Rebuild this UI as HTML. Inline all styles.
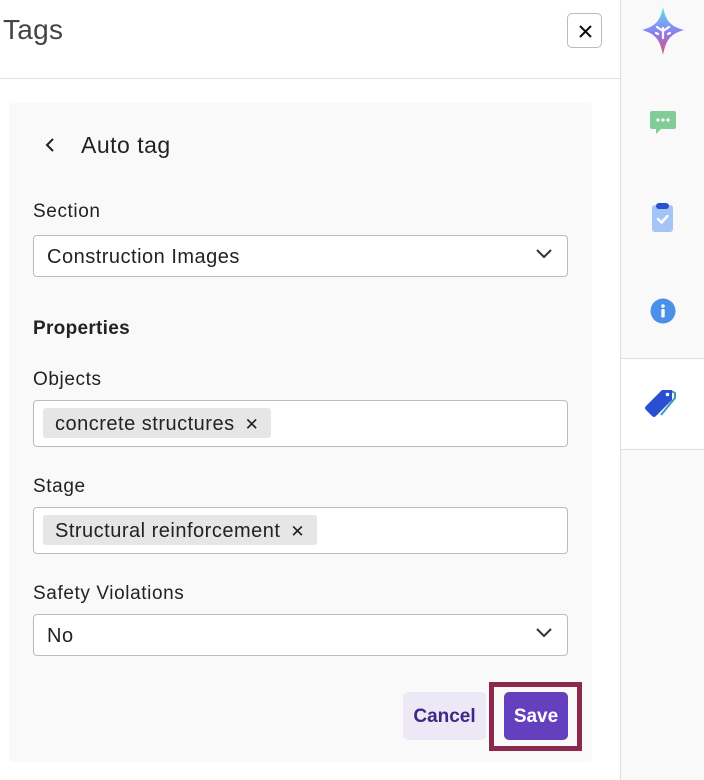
<!DOCTYPE html>
<html><head><meta charset="utf-8"><style>
*{box-sizing:border-box;margin:0;padding:0}
body{width:704px;height:780px;background:#fff;font-family:"Liberation Sans",sans-serif;color:#222;position:relative;overflow:hidden}
.abs{position:absolute}
.title{left:3px;top:14px;font-size:28px;color:#444;letter-spacing:0.3px}
.close{left:567px;top:13px;width:35px;height:35px;border:1px solid #bbb;border-radius:5px;background:#fff}
.hr{left:0;top:78px;width:620px;height:1px;background:#ddd}
.side{left:620px;top:0;width:84px;height:780px;background:#f9f9f9;border-left:1px solid #ddd}
.tagsel{left:621px;top:358px;width:83px;height:92px;background:#fff;border-top:1px solid #ddd;border-bottom:1px solid #ddd}
.card{left:9px;top:103px;width:583px;height:659px;background:#f9f9f9;border-radius:4px}
.lbl{font-size:19px;color:#222;letter-spacing:0.6px}
.box{left:33px;width:535px;height:42px;border:1px solid #bbb;border-radius:4px;background:#fff}
.sel{font-size:20px;padding:10px 0 0 13px;letter-spacing:0.5px}
.chev{position:absolute;right:14px;top:12px}
.chip{position:absolute;left:9px;top:7px;height:30px;background:#e6e6e6;border-radius:3px;font-size:20px;padding:5px 12px 0;white-space:nowrap;letter-spacing:0.5px}
.chip span{margin-left:10px;font-size:17px}
.btn{top:692px;height:48px;border-radius:5px;font-weight:bold;font-size:19px;text-align:center;line-height:50px}
</style></head><body>
<div class="abs title">Tags</div>
<div class="abs close"><svg width="35" height="35" viewBox="0 0 35 35"><path d="M12 12L23 23M23 12L12 23" stroke="#111" stroke-width="2"/></svg></div>
<div class="abs hr"></div>
<div class="abs side"></div>
<div class="abs tagsel"></div>
<svg class="abs" style="left:641px;top:6px" width="44" height="50" viewBox="0 0 44 50"><defs><linearGradient id="g" x1="0" y1="0" x2="0" y2="1"><stop offset="0" stop-color="#5de0f0"/><stop offset=".55" stop-color="#8b7bf0"/><stop offset="1" stop-color="#e0506a"/></linearGradient></defs><path d="M22 1C25 15 29 20 43 24C29 28 25 34 22 49C19 34 15 28 1 24C15 20 19 15 22 1Z" fill="url(#g)"/><path d="M22 22V32M22 25L16 21M22 25L28 21M15 27L17 28M29 27L27 28" stroke="#fff" stroke-width="2.2" stroke-linecap="round"/></svg>
<svg class="abs" style="left:649px;top:110px" width="28" height="26" viewBox="0 0 28 26"><path d="M3 1H25Q27 1 27 3V17Q27 19 25 19H12L7 24V19H3Q1 19 1 17V3Q1 1 3 1Z" fill="#82cc98"/><circle cx="9" cy="10" r="1.6" fill="#fff"/><circle cx="14" cy="10" r="1.6" fill="#fff"/><circle cx="19" cy="10" r="1.6" fill="#fff"/></svg>
<svg class="abs" style="left:651px;top:202px" width="24" height="30" viewBox="0 0 24 30"><rect x="1" y="3" width="21" height="27" rx="3" fill="#a4c4f6"/><rect x="5" y="1" width="13" height="6" rx="3" fill="#2a4fd0"/><path d="M7 17L10.5 20.5L16.5 14" stroke="#fff" stroke-width="2.4" fill="none" stroke-linecap="round"/></svg>
<svg class="abs" style="left:650px;top:298px" width="26" height="26" viewBox="0 0 26 26"><circle cx="13" cy="13" r="12.5" fill="#4a8fe8"/><circle cx="13" cy="8" r="1.8" fill="#fff"/><rect x="11.3" y="11" width="3.4" height="8.5" rx="1" fill="#fff"/></svg>
<svg class="abs" style="left:645px;top:388px" width="34" height="32" viewBox="0 0 34 32"><path d="M26 3L30 5V10L16 27" stroke="#3a9ac0" stroke-width="2" fill="none"/><path d="M17 2H27V12L11 28Q9 30 7 28L1 22Q-1 20 1 18Z" fill="#2a4fd0"/><circle cx="22.5" cy="6.5" r="1.8" fill="#fff"/></svg>

<div class="abs card"></div>
<svg class="abs" style="left:43px;top:137px" width="14" height="16" viewBox="0 0 14 16"><path d="M10 2L4 8L10 14" stroke="#222" stroke-width="2" fill="none"/></svg>
<div class="abs" style="left:81px;top:132px;font-size:23px;color:#222;letter-spacing:0.5px">Auto tag</div>
<div class="abs lbl" style="left:33px;top:201px">Section</div>
<div class="abs box sel" style="top:235px">Construction Images<svg class="chev" width="18" height="12" viewBox="0 0 18 12"><path d="M2 2L9 9L16 2" stroke="#333" stroke-width="2" fill="none"/></svg></div>
<div class="abs" style="left:33px;top:318px;font-size:19px;font-weight:bold;letter-spacing:0.3px">Properties</div>
<div class="abs lbl" style="left:33px;top:369px">Objects</div>
<div class="abs box" style="top:400px;height:47px"><div class="chip">concrete structures<span>✕</span></div></div>
<div class="abs lbl" style="left:33px;top:476px">Stage</div>
<div class="abs box" style="top:507px;height:47px"><div class="chip">Structural reinforcement<span>✕</span></div></div>
<div class="abs lbl" style="left:33px;top:583px">Safety Violations</div>
<div class="abs box sel" style="top:614px">No<svg class="chev" width="18" height="12" viewBox="0 0 18 12"><path d="M2 2L9 9L16 2" stroke="#333" stroke-width="2" fill="none"/></svg></div>
<div class="abs btn" style="left:403px;width:83px;background:#ece8f6;color:#3a2a85">Cancel</div>
<div class="abs" style="left:489px;top:682px;width:93px;height:69px;border:5px solid #8c2a4e"></div>
<div class="abs btn" style="left:504px;width:64px;background:#6440bf;color:#fff">Save</div>
</body></html>
